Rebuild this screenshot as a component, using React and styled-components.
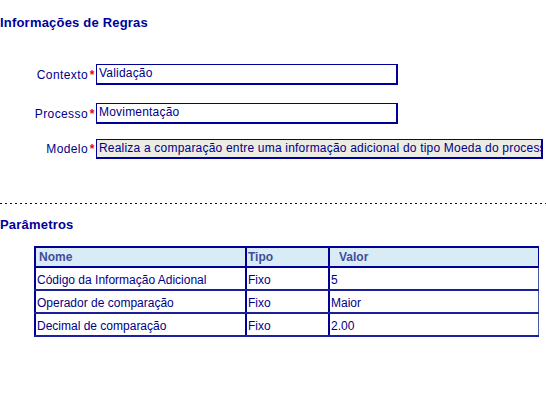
import React from 'react';
import styled, {createGlobalStyle} from "styled-components";

const Global = createGlobalStyle`
  body {
    margin: 0;
    background: #ffffff;
    font-family: "Liberation Sans", Arial, sans-serif;
    color: #000088;
  }
`;

const Page = styled.div`
  width: 546px;
  height: 400px;
  overflow: hidden;
  padding-top: 15px;
  box-sizing: border-box;
`;

const Title = styled.h2`
  margin: 0;
  font-size: 13px;
  line-height: 16px;
  letter-spacing: 0.2px;
  font-weight: bold;
  color: #000099;
`;

const Form = styled.div`
  margin-top: 33px;
  display: flex;
  flex-direction: column;
`;

const Row = styled.div`
  display: grid;
  grid-template-columns: 88px 8px auto;
  align-items: center;
  margin-bottom: ${p => p.gap || 0}px;
`;

const Label = styled.label`
  font-size: 12px;
  letter-spacing: 0.4px;
  text-align: right;
  color: #000088;
`;

const Star = styled.span`
  color: #ee0000;
  font-size: 12px;
  font-weight: bold;
  text-align: center;
`;

const Field = styled.div`
  width: ${p => p.w}px;
  height: ${p => p.h || 21}px;
  box-sizing: border-box;
  border-style: solid;
  border-width: 1px 2px 2px 1px;
  border-color: #000099;
  background: ${p => p.readOnly ? '#ecebe4' : '#ffffff'};
  font-size: 12px;
  letter-spacing: 0.2px;
  line-height: 17px;
  padding-left: 2px;
  white-space: nowrap;
  overflow: hidden;
  color: #000088;
`;

const Divider = styled.div`
  margin-top: 44px;
  height: 1px;
  background: repeating-linear-gradient(90deg, #000088 0 2px, transparent 2px 5px);
`;

const Subtitle = styled.h3`
  margin: 13px 0 0;
  font-size: 13px;
  line-height: 16px;
  letter-spacing: 0.2px;
  font-weight: bold;
  color: #000099;
`;

const TableWrap = styled.div`
  padding: 13px 0 0 34px;
`;

const Table = styled.table`
  border-collapse: collapse;
  width: 505px;
  font-size: 12px;
  border-right: 1px solid #4b57a3;
`;

const Th = styled.th`
  height: 20px;
  box-sizing: border-box;
  background: #d9ecf5;
  color: #3f4d9d;
  text-align: left;
  font-weight: bold;
  font-size: 12px;
  padding: 0 0 0 ${p => p.indent || 3}px;
  border-style: solid;
  border-color: #000099;
  border-width: 2px 1px 2px 2px;
  width: ${p => p.w}px;
`;

const Td = styled.td`
  height: 23px;
  box-sizing: border-box;
  padding: 2px 0 0 1px;
  color: #000088;
  border-left: 2px solid #000099;
  border-bottom: 2px solid #1a2099;
`;

const params = [
    {nome: 'Código da Informação Adicional', tipo: 'Fixo', valor: '5'},
    {nome: 'Operador de comparação', tipo: 'Fixo', valor: 'Maior'},
    {nome: 'Decimal de comparação', tipo: 'Fixo', valor: '2.00'},
];

const App = () => {
    return (
        <Page>
            <Global/>
            <Title>Informações de Regras</Title>

            <Form>
                <Row gap={18}>
                    <Label>Contexto</Label>
                    <Star>*</Star>
                    <Field w={302}>Validação</Field>
                </Row>
                <Row gap={15}>
                    <Label>Processo</Label>
                    <Star>*</Star>
                    <Field w={302}>Movimentação</Field>
                </Row>
                <Row>
                    <Label>Modelo</Label>
                    <Star>*</Star>
                    <Field w={447} h={20} readOnly>Realiza a comparação entre uma informação adicional do tipo Moeda do processo</Field>
                </Row>
            </Form>

            <Divider/>

            <Subtitle>Parâmetros</Subtitle>

            <TableWrap>
                <Table>
                    <thead>
                    <tr>
                        <Th w={211}>Nome</Th>
                        <Th w={83} indent={1}>Tipo</Th>
                        <Th indent={9}>Valor</Th>
                    </tr>
                    </thead>
                    <tbody>
                    {params.map(p => (
                        <tr key={p.nome}>
                            <Td>{p.nome}</Td>
                            <Td>{p.tipo}</Td>
                            <Td>{p.valor}</Td>
                        </tr>
                    ))}
                    </tbody>
                </Table>
            </TableWrap>
        </Page>
    );
};

export default App;
